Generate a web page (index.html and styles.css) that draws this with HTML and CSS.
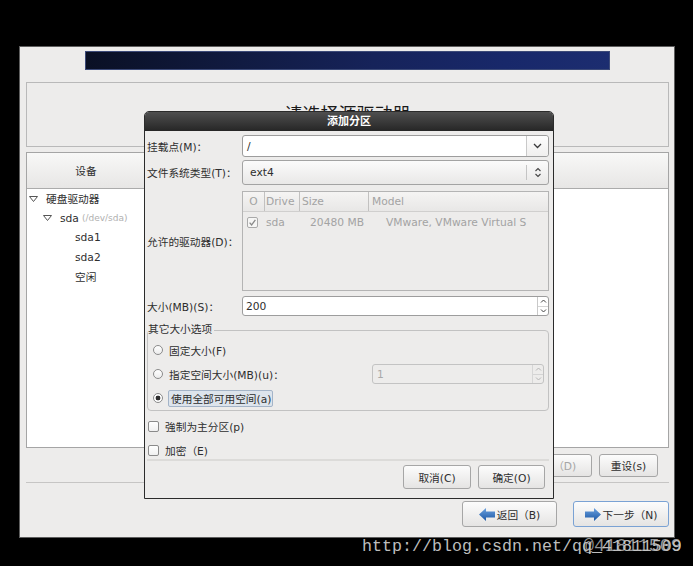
FILE: index.html
```html
<!DOCTYPE html>
<html lang="zh-CN">
<head>
<meta charset="utf-8">
<title>添加分区</title>
<link rel="stylesheet" href="styles.css">
</head>
<body>
<div class="win">
  <div class="banner"></div>
  <div class="head-panel"><h1 class="head-title">请选择源驱动器</h1></div>
  <div class="tree-panel">
    <div class="tree-header"><div class="col-dev">设备</div><div class="col-rest"></div></div>
    <ul class="tree">
      <li class="tree-row lvl0"><svg class="tri" width="9" height="6" viewBox="0 0 9 6"><polygon points="0.5,0.5 8.5,0.5 4.5,5.5" fill="#fff" stroke="#555" stroke-width="1"/></svg>硬盘驱动器</li>
      <li class="tree-row lvl1"><svg class="tri" width="9" height="6" viewBox="0 0 9 6"><polygon points="0.5,0.5 8.5,0.5 4.5,5.5" fill="#fff" stroke="#555" stroke-width="1"/></svg>sda<span class="dev">(/dev/sda)</span></li>
      <li class="tree-row lvl2">sda1</li>
      <li class="tree-row lvl2">sda2</li>
      <li class="tree-row lvl2">空闲</li>
    </ul>
  </div>
  <div class="action-row">
    <button class="btn btn-del" disabled>删除（D)</button>
    <button class="btn btn-reset">重设(s)</button>
  </div>
  <div class="sep"></div>
  <div class="nav-row">
    <button class="btn nav nav-back"><svg class="arrow" width="16" height="13" viewBox="0 0 16 13"><defs><linearGradient id="ga" x1="0" y1="0" x2="0" y2="1"><stop offset="0" stop-color="#6aa0df"/><stop offset="1" stop-color="#1d58a5"/></linearGradient></defs><polygon points="0,6.5 7,0 7,3.5 16,3.5 16,9.5 7,9.5 7,13" fill="url(#ga)"/></svg>返回（B)</button>
    <button class="btn nav nav-next"><svg class="arrow" width="16" height="13" viewBox="0 0 16 13"><defs><linearGradient id="gb" x1="0" y1="0" x2="0" y2="1"><stop offset="0" stop-color="#6aa0df"/><stop offset="1" stop-color="#1d58a5"/></linearGradient></defs><polygon points="16,6.5 9,0 9,3.5 0,3.5 0,9.5 9,9.5 9,13" fill="url(#gb)"/></svg>下一步（N)</button>
  </div>

  <div class="dialog">
    <div class="dlg-title">添加分区</div>
    <div class="dlg-body">
      <div class="frow r1">
        <label class="flabel">挂载点(M)：</label>
        <div class="entry-combo">
          <span class="entry-text">/</span>
          <span class="entry-btn"><svg width="9" height="6" viewBox="0 0 9 6"><path d="M1 1 L4.5 4.5 L8 1" fill="none" stroke="#3a3a3a" stroke-width="1.3"/></svg></span>
        </div>
      </div>
      <div class="frow r2">
        <label class="flabel">文件系统类型(T)：</label>
        <div class="combo">
          <span class="combo-text">ext4</span>
          <span class="combo-btn"><svg width="8" height="11" viewBox="0 0 8 11"><path d="M1.5 4 L4 1.5 L6.5 4 M1.5 7 L4 9.5 L6.5 7" fill="none" stroke="#444" stroke-width="1.1"/></svg></span>
        </div>
      </div>
      <div class="frow r3">
        <label class="flabel">允许的驱动器(D)：</label>
        <div class="drives">
          <div class="dr-head">
            <span class="dc c0">O</span>
            <span class="dc c1 hsep">Drive</span>
            <span class="dc c2 hsep">Size</span>
            <span class="dc c3 hsep">Model</span>
          </div>
          <div class="dr-row">
            <span class="dc c0"><svg class="dchk" width="11" height="11" viewBox="0 0 11 11"><rect x="0.5" y="0.5" width="10" height="10" rx="1.5" fill="#f6f6f5" stroke="#a9a9a9"/><path d="M2.6 5.6 L4.6 7.9 L8.4 2.9" fill="none" stroke="#8a8a8a" stroke-width="1.3"/></svg></span>
            <span class="dc c1">sda</span>
            <span class="dc c2 size">20480 MB</span>
            <span class="dc c3 model">VMware, VMware Virtual S</span>
          </div>
        </div>
      </div>
      <div class="frow r4">
        <label class="flabel">大小(MB)(S)：</label>
        <div class="spin">
          <span class="spin-text">200</span>
          <span class="spin-btns">
            <span class="spin-up"><svg width="7" height="4" viewBox="0 0 7 4"><path d="M1 3.5 L3.5 1 L6 3.5" fill="none" stroke="#444" stroke-width="1"/></svg></span>
            <span class="spin-down"><svg width="7" height="4" viewBox="0 0 7 4"><path d="M1 0.5 L3.5 3 L6 0.5" fill="none" stroke="#444" stroke-width="1"/></svg></span>
          </span>
        </div>
      </div>

      <fieldset class="sizeopts">
        <legend>其它大小选项</legend>
        <div class="opt"><span class="radio"></span>固定大小(F)</div>
        <div class="opt"><span class="radio"></span>指定空间大小(MB)(u)：
          <div class="spin spin-dis">
            <span class="spin-text">1</span>
            <span class="spin-btns">
              <span class="spin-up"><svg width="7" height="4" viewBox="0 0 7 4"><path d="M1 3.5 L3.5 1 L6 3.5" fill="none" stroke="#b4b4b4" stroke-width="1"/></svg></span>
              <span class="spin-down"><svg width="7" height="4" viewBox="0 0 7 4"><path d="M1 0.5 L3.5 3 L6 0.5" fill="none" stroke="#b4b4b4" stroke-width="1"/></svg></span>
            </span>
          </div>
        </div>
        <div class="opt"><span class="radio on"></span><span class="focus-label">使用全部可用空间(a)</span></div>
      </fieldset>

      <div class="chk-row c-first"><span class="chk"></span>強制为主分区(p)</div>
      <div class="chk-row c-second"><span class="chk"></span>加密（E)</div>
      <div class="dlg-sep"></div>
      <div class="dlg-btns">
        <button class="btn btn-cancel">取消(C)</button>
        <button class="btn btn-ok">确定(O)</button>
      </div>
    </div>
  </div>
</div>
<div class="watermark">http://blog.csdn.net/qq_41811509</div>
<div class="watermark-over">@41811509</div>
</body>
</html>
```
FILE: styles.css
```css
* { box-sizing: border-box; }
html, body { margin: 0; }
body {
  position: relative;
  width: 693px;
  height: 566px;
  overflow: hidden;
  padding: 46px 0 0 19px;
  background: #000;
  font-family: "DejaVu Sans", "Noto Sans CJK SC", sans-serif;
  font-size: 10.7px;
  color: #2e2e2e;
}

.win {
  position: relative;
  width: 656px;
  height: 492px;
  border: 1px solid #5e5e5e;
  background: #edeceb;
  display: flex;
  flex-direction: column;
}

.banner {
  width: 525px;
  height: 19px;
  margin: 4px auto 0;
  border: 1px solid #3c4a78;
  background: linear-gradient(100deg, #0a1024 0%, #111b42 30%, #16235a 55%, #18286a 80%, #1c2d70 100%);
}

.head-panel {
  margin: 12px 5px 0 6px;
  height: 65px;
  border: 1px solid #b9b9b9;
  display: flex;
  align-items: center;
  justify-content: center;
  padding-bottom: 3px;
}
.head-title {
  margin: 0;
  font-size: 18px;
  font-weight: normal;
  color: #1a1a1a;
  font-family: "Noto Sans CJK SC", sans-serif;
}

.tree-panel {
  margin: 5px 5px 0 6px;
  height: 296px;
  border: 1px solid #a5a5a5;
  background: #fff;
  display: flex;
  flex-direction: column;
}
.tree-header {
  height: 36px;
  flex: none;
  display: flex;
  background: linear-gradient(#f8f8f7, #e7e6e5);
  border-bottom: 1px solid #ababab;
}
.col-dev {
  width: 118px;
  display: flex;
  align-items: center;
  justify-content: center;
}
.col-rest { flex: 1; }
.tree {
  list-style: none;
  margin: 0;
  padding: 0;
}
.tree-row {
  height: 19.5px;
  display: flex;
  align-items: center;
}
.lvl0 { padding-left: 2px; }
.lvl1 { padding-left: 16px; }
.lvl2 { padding-left: 48px; }
.tri { margin-right: 8px; flex: none; }
.dev { margin-left: 3px; font-size: 9px; color: #b0b0b0; }

.btn {
  font: inherit;
  color: #2e2e2e;
  border: 1px solid #a6a6a6;
  border-radius: 3px;
  background: linear-gradient(#fcfcfc, #e5e4e3);
  display: flex;
  align-items: center;
  justify-content: center;
  padding: 0;
}

.action-row {
  margin: 6px 16px 0 6px;
  height: 23px;
  display: flex;
  justify-content: flex-end;
  gap: 7px;
}
.btn-del { width: 76px; color: #a5a5a5; }
.btn-reset { width: 59px; }

.sep {
  margin: 5px 5px 0 6px;
  height: 1px;
  background: #c6c5c4;
}

.nav-row {
  margin: 18px 5px 0 6px;
  height: 26px;
  display: flex;
  justify-content: flex-end;
  gap: 16px;
}
.nav { height: 26px; }
.nav-back { width: 95px; }
.nav-next { width: 96px; border-color: #7aa2d4; }
.arrow { margin-right: 2px; }

/* dialog */
.dialog {
  position: absolute;
  left: 124px;
  top: 64px;
  width: 410px;
  height: 388px;
  border: 1px solid #2b2b2b;
  border-radius: 5px 5px 0 0;
  background: #edeceb;
}
.dlg-title {
  height: 19px;
  line-height: 19px;
  text-align: center;
  color: #fff;
  font-weight: bold;
  font-size: 11px;
  background: linear-gradient(#4f4f4f, #262626);
  border-radius: 4px 4px 0 0;
}
.dlg-body { padding: 4px 4px 0 2px; }

.frow {
  display: grid;
  grid-template-columns: 95px 1fr;
  align-items: center;
}
.r1 { height: 22px; }
.r2 { height: 25px; margin-top: 3px; }
.r3 { height: 100px; margin-top: 6px; }
.r4 { height: 20px; margin-top: 5px; }
.flabel { white-space: nowrap; }

.entry-combo {
  height: 22px;
  display: flex;
  border: 1px solid #9d9d9d;
  border-radius: 3px;
  background: #fff;
}
.entry-text { flex: 1; padding-left: 4px; display: flex; align-items: center; }
.entry-btn {
  width: 22px;
  border-left: 1px solid #c9c9c9;
  display: flex;
  align-items: center;
  justify-content: center;
  background: linear-gradient(#fdfdfd, #f0efee);
  border-radius: 0 3px 3px 0;
}

.combo {
  height: 25px;
  display: flex;
  border: 1px solid #a3a3a3;
  border-radius: 3px;
  background: linear-gradient(#fbfbfb, #e9e8e7);
}
.combo-text { flex: 1; padding-left: 7px; display: flex; align-items: center; }
.combo-btn {
  width: 22px;
  margin: 4px 0;
  border-left: 1px solid #c4c4c4;
  display: flex;
  align-items: center;
  justify-content: center;
}

.drives {
  height: 100px;
  border: 1px solid #b4b4b4;
  background: #edeceb;
  color: #a3a3a3;
}
.dr-head {
  height: 20px;
  display: flex;
  align-items: stretch;
  background: linear-gradient(#f5f4f3, #e8e7e6);
  border-bottom: 1px solid #d0cfce;
}
.dr-row {
  height: 20px;
  display: flex;
  align-items: center;
}
.dc { display: flex; align-items: center; white-space: nowrap; }
.c0 { width: 21px; justify-content: center; }
.dr-row .c0 { justify-content: flex-start; padding-left: 4px; }
.c1 { width: 35px; padding-left: 2px; }
.c2 { width: 69px; padding-left: 2px; }
.c3 { flex: 1; padding-left: 3px; }
.hsep { border-left: 1px solid #c2c1c0; }
.dr-head .c1 { padding-left: 1px; }
.size { justify-content: flex-end; padding-right: 4px; }
.model { padding-left: 18px; }

.spin {
  height: 20px;
  display: flex;
  border: 1px solid #9d9d9d;
  border-radius: 3px;
  background: #fff;
}
.spin-text { flex: 1; padding-left: 3px; display: flex; align-items: center; }
.spin-btns {
  width: 11px;
  display: flex;
  flex-direction: column;
  border-left: 1px solid #c9c9c9;
}
.spin-up, .spin-down {
  flex: 1;
  display: flex;
  align-items: center;
  justify-content: center;
}
.spin-up { border-bottom: 1px solid #d4d4d4; }

.sizeopts {
  margin: 7px 0 0;
  padding: 1px 0 0 5px;
  border: 1px solid #c2c2c2;
  border-radius: 4px;
  min-width: 0;
}
.sizeopts legend {
  padding: 0 2px 0 0;
  margin-left: -5px;
  line-height: 14px;
}
.opt {
  height: 24px;
  display: flex;
  align-items: center;
}
.radio {
  width: 10px;
  height: 10px;
  border-radius: 50%;
  border: 1px solid #8b8b8b;
  background: linear-gradient(#ffffff, #ececec);
  margin-right: 6px;
  flex: none;
}
.radio.on {
  background: radial-gradient(circle, #2e2e2e 0 2.1px, #ffffff 2.7px);
  margin-right: 5px;
}
.spin-dis {
  margin-left: auto;
  margin-right: 4px;
  width: 172px;
  height: 20px;
  background: #edeceb;
  border-color: #c3c3c3;
  color: #a9a9a9;
}
.spin-dis .spin-text { padding-left: 4px; }
.spin-dis .spin-btns { border-left-color: #d6d6d6; }
.focus-label {
  padding: 0 1px 0 2px;
  height: 17px;
  display: flex;
  align-items: center;
  background: #dde4ec;
  border: 1px solid #a4b4c8;
  border-radius: 2px;
}

.chk-row {
  height: 16px;
  display: flex;
  align-items: center;
}
.c-first { margin-top: 7px; }
.c-second { margin-top: 8px; }
.chk {
  width: 11px;
  height: 11px;
  margin: 0 6px 0 1px;
  border: 1px solid #8a8a8a;
  border-radius: 2px;
  background: linear-gradient(#ffffff, #f0f0f0);
  flex: none;
}
.dlg-sep {
  margin-top: 1px;
  height: 2px;
  background: #dcdbd9;
}
.dlg-btns {
  margin-top: 4px;
  padding-right: 4px;
  display: flex;
  justify-content: flex-end;
  gap: 7px;
}
.dlg-btns .btn { height: 24px; }
.btn-cancel { width: 68px; }
.btn-ok { width: 67px; }

.watermark {
  position: absolute;
  left: 362px;
  top: 538px;
  font-family: "Liberation Mono", monospace;
  font-size: 16.67px;
  line-height: 17px;
  color: #bdbdbd;
  white-space: nowrap;
}
.watermark-over {
  position: absolute;
  left: 583px;
  top: 537px;
  font-family: "Liberation Mono", monospace;
  font-size: 18.3px;
  line-height: 18px;
  color: rgba(200, 200, 200, 0.75);
  white-space: nowrap;
}
```
